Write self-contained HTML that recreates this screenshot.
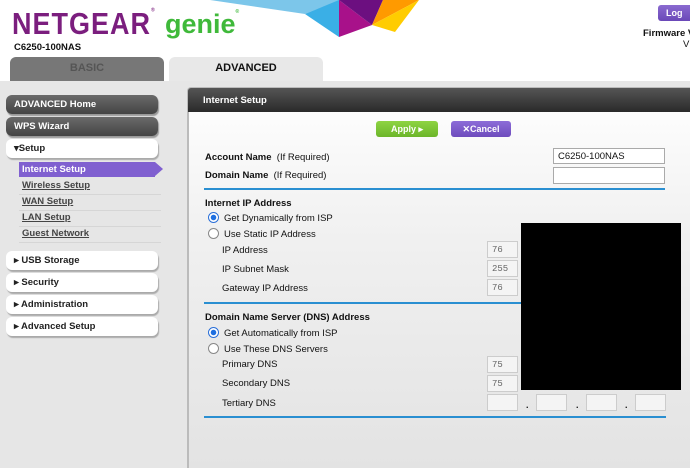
<!DOCTYPE html>
<html><head><meta charset="utf-8"><style>
*{margin:0;padding:0;box-sizing:border-box}
body{width:690px;height:468px;overflow:hidden;background:#e6e6e6;font-family:"Liberation Sans",Arial,sans-serif;position:relative;font-size:9px;color:#111}
.a{position:absolute}
.hdr{left:0;top:0;width:690px;height:81px;background:#fff}
.logo{left:12px;top:7px;font-size:27px;font-weight:bold;color:#7b1e7e;letter-spacing:1px;transform:scaleY(1.12);transform-origin:top left}
.genie{left:165px;top:9px;font-size:27px;font-weight:bold;color:#3fb93a}
.tab{top:57px;height:24px;border-radius:6px 6px 0 0;text-align:center;font-weight:bold;font-size:11px;line-height:23px}
.btn{left:6px;width:152px;height:19px;border-radius:6px;font-weight:bold;font-size:9.5px;line-height:19px;padding-left:8px}
.dk{background:linear-gradient(#6a6a6a,#444);color:#fff;box-shadow:1px 2px 1px #999}
.lt{background:#fff;color:#222;box-shadow:1px 2px 1px #aaa}
.sub{left:22px;font-size:9.5px;font-weight:bold;color:#444;text-decoration:underline}
.sep{left:19px;width:142px;height:1px;background:#d6d6d6}
.lbl{font-size:9.5px}
.b{font-weight:bold}
.inp{background:#f4f4f4;border:1px solid #ccc;height:17px;width:31px;font-family:"Liberation Mono",monospace;font-size:9px;color:#666;padding:3px 4px;line-height:10px}
.line{height:2px;background:#2a8fd1;left:204px}
.rad{width:11px;height:11px;border-radius:50%;border:1px solid #888;background:#fff}
.on{border:1px solid #2a6fd8;background:radial-gradient(#1e6fe0 2.5px,#fff 3px)}
</style></head><body>
<div class="a hdr"></div>
<svg class="a" style="left:0;top:0" width="690" height="40">
<polygon points="210,0 340,0 305,14" fill="#7cc6ea"/>
<polygon points="305,14 339,0 339,37" fill="#3aafe6"/>
<polygon points="339,0 372,25 339,37" fill="#a8118a"/>
<polygon points="339,0 383,0 372,25" fill="#6c0f80"/>
<polygon points="383,0 419,0 372,25" fill="#ff9a00"/>
<polygon points="372,25 395,32 419,0" fill="#ffcc00"/>
</svg>
<div class="a logo">NETGEAR<span style="font-size:5px;vertical-align:top">®</span></div>
<div class="a genie">genie<span style="font-size:5px;vertical-align:top">®</span></div>
<div class="a b" style="left:14px;top:42px;font-size:9.5px">C6250-100NAS</div>
<div class="a" style="left:658px;top:5px;width:40px;height:16px;border-radius:3px;background:linear-gradient(#8a6ad0,#6a48b8);color:#fff;font-weight:bold;font-size:9px;padding:3px 8px">Log</div>
<div class="a b" style="left:643px;top:28px;font-size:9.5px;white-space:nowrap">Firmware V</div>
<div class="a" style="left:683px;top:39px;font-size:9.5px">V</div>
<div class="a tab" style="left:10px;width:154px;background:#777;color:#555">BASIC</div>
<div class="a tab" style="left:169px;width:154px;background:#e8e8e8;color:#111">ADVANCED</div>

<div class="a btn dk" style="top:95px">ADVANCED Home</div>
<div class="a btn dk" style="top:117px">WPS Wizard</div>
<div class="a btn lt" style="top:139px">▾Setup</div>
<div class="a" style="left:19px;top:162px;width:136px;height:15px;background:#8060d0"></div>
<div class="a" style="left:155px;top:162px;width:0;height:0;border-top:7.5px solid transparent;border-bottom:7.5px solid transparent;border-left:8px solid #8060d0"></div>
<div class="a b" style="left:22px;top:164px;font-size:9.5px;color:#fff">Internet Setup</div>
<div class="a sub" style="top:180px">Wireless Setup</div>
<div class="a sep" style="top:194px"></div>
<div class="a sub" style="top:196px">WAN Setup</div>
<div class="a sep" style="top:210px"></div>
<div class="a sub" style="top:212px">LAN Setup</div>
<div class="a sep" style="top:226px"></div>
<div class="a sub" style="top:228px">Guest Network</div>
<div class="a sep" style="top:242px"></div>
<div class="a btn lt" style="top:251px">▸ USB Storage</div>
<div class="a btn lt" style="top:273px">▸ Security</div>
<div class="a btn lt" style="top:295px">▸ Administration</div>
<div class="a btn lt" style="top:317px">▸ Advanced Setup</div>

<div class="a" style="left:187px;top:87px;width:503px;height:381px;border:2px solid #bbb;border-right:none;border-bottom:none;background:linear-gradient(#fff,#f0f0f0 40%,#e3e3e3);border-radius:4px 0 0 0"></div>
<div class="a" style="left:188px;top:88px;width:502px;height:24px;background:linear-gradient(#555,#2a2a2a);color:#fff;font-weight:bold;font-size:9.5px;padding:7px 15px;border-radius:3px 0 0 0">Internet Setup</div>
<div class="a b" style="left:376px;top:121px;width:62px;height:16px;border-radius:3px;background:linear-gradient(#8ed443,#6cb52a);color:#fff;font-size:9px;text-align:center;line-height:16px">Apply ▸</div>
<div class="a b" style="left:451px;top:121px;width:60px;height:16px;border-radius:3px;background:linear-gradient(#8c6cd8,#6e4cbd);color:#fff;font-size:9px;text-align:center;line-height:16px">✕Cancel</div>

<div class="a lbl" style="left:205px;top:152px"><b>Account Name</b>&nbsp; (If Required)</div>
<div class="a lbl" style="left:205px;top:170px"><b>Domain Name</b>&nbsp; (If Required)</div>
<div class="a" style="left:553px;top:148px;width:112px;height:16px;border:1px solid #aaa;background:#fff;font-size:9.5px;padding:2px 4px">C6250-100NAS</div>
<div class="a" style="left:553px;top:167px;width:112px;height:17px;border:1px solid #aaa;background:#fff"></div>
<div class="a line" style="top:188px;width:461px"></div>

<div class="a lbl b" style="left:205px;top:198px">Internet IP Address</div>
<div class="a rad on" style="left:208px;top:212px"></div>
<div class="a lbl" style="left:224px;top:213px">Get Dynamically from ISP</div>
<div class="a rad" style="left:208px;top:228px"></div>
<div class="a lbl" style="left:224px;top:229px">Use Static IP Address</div>
<div class="a lbl" style="left:222px;top:245px">IP Address</div>
<div class="a lbl" style="left:222px;top:264px">IP Subnet Mask</div>
<div class="a lbl" style="left:222px;top:283px">Gateway IP Address</div>
<div class="a inp" style="left:487px;top:241px">76</div>
<div class="a inp" style="left:487px;top:260px">255</div>
<div class="a inp" style="left:487px;top:279px">76</div>
<div class="a line" style="top:302px;width:317px"></div>

<div class="a lbl b" style="left:205px;top:312px">Domain Name Server (DNS) Address</div>
<div class="a rad on" style="left:208px;top:327px"></div>
<div class="a lbl" style="left:224px;top:328px">Get Automatically from ISP</div>
<div class="a rad" style="left:208px;top:343px"></div>
<div class="a lbl" style="left:224px;top:344px">Use These DNS Servers</div>
<div class="a lbl" style="left:222px;top:359px">Primary DNS</div>
<div class="a lbl" style="left:222px;top:378px">Secondary DNS</div>
<div class="a lbl" style="left:222px;top:398px">Tertiary DNS</div>
<div class="a inp" style="left:487px;top:356px">75</div>
<div class="a inp" style="left:487px;top:375px">75</div>
<div class="a inp" style="left:487px;top:394px"></div>
<div class="a inp" style="left:536px;top:394px"></div>
<div class="a inp" style="left:586px;top:394px"></div>
<div class="a inp" style="left:635px;top:394px"></div>
<div class="a b" style="left:526px;top:400px">.</div>
<div class="a b" style="left:576px;top:400px">.</div>
<div class="a b" style="left:625px;top:400px">.</div>
<div class="a line" style="top:416px;width:462px"></div>

<div class="a" style="left:521px;top:223px;width:160px;height:167px;background:#000"></div>
</body></html>
